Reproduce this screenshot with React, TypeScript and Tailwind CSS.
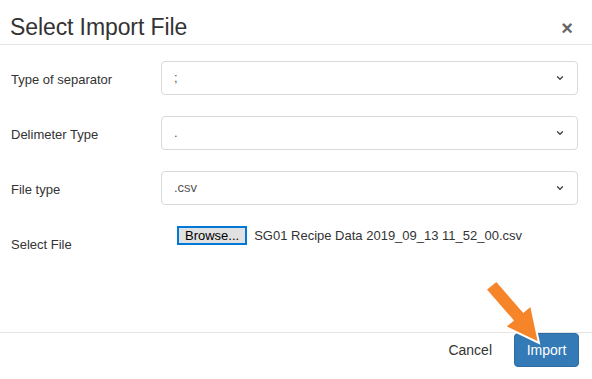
import { ChevronDown } from 'lucide-react'

const rows = [
    { label: 'Type of separator', value: ';' },
    { label: 'Delimeter Type', value: '.' },
    { label: 'File type', value: '.csv' },
]

function Arrow() {
    return (
        <svg className="absolute left-0 top-0 pointer-events-none" width="592" height="379" viewBox="0 0 592 379">
            <polygon
                points="485.6,289.4 496.4,280.6 523.4,311.6 531,305.3 539,343 505,326.7 512.6,320.4"
                fill="#f68428"
                stroke="#ffffff"
                strokeWidth="2"
                strokeLinejoin="miter"
            />
        </svg>
    )
}

export default function App() {
    return (
        <div className="relative w-[592px] h-[379px] bg-white overflow-hidden text-[#333] font-['Liberation_Sans',Arial,sans-serif]">
            {/* Header */}
            <div className="h-[45px] border-b border-[#e5e5e5] flex items-center justify-between pl-[10px] pr-[19px]">
                <h4 className="text-[23px] leading-none tracking-[-0.1px] mt-[11px]">Select Import File</h4>
                <button className="text-[20px] font-bold leading-none text-[#555] opacity-90 mt-[11px]">×</button>
            </div>

            {/* Body */}
            <div className="h-[287px] pt-[16px]">
                {rows.map((r) => (
                    <div key={r.label} className="flex items-center h-[34px] mb-[21px]">
                        <label className="w-[161px] pl-[11px] text-[13px] mt-[3px]">{r.label}</label>
                        <div className="w-[417px] h-[34px] border border-[#d9d9d9] rounded-[4px] flex items-center justify-between pl-[12px] pr-[12px]">
                            <span className="text-[13px] text-[#555]">{r.value}</span>
                            <ChevronDown className="w-[10px] h-[10px] text-[#444]" strokeWidth={3.2} />
                        </div>
                    </div>
                ))}
                <div className="flex h-[24px] mt-[1px]">
                    <label className="w-[161px] pl-[11px] text-[13px] pt-[9px]">Select File</label>
                    <div className="flex items-start pl-[16px]">
                        <button className="h-[19px] px-[6px] bg-[#e1e1e1] border-2 border-[#0078d7] text-[13px] leading-none text-black">Browse...</button>
                        <span className="ml-[7px] text-[13px] leading-[19px]">SG01 Recipe Data 2019_09_13 11_52_00.csv</span>
                    </div>
                </div>
            </div>

            {/* Footer */}
            <div className="border-t border-[#e5e5e5] flex items-center justify-end gap-[22px] pr-[13px]">
                <button className="text-[14px] text-[#333] mt-[1px]">Cancel</button>
                <button className="w-[65px] h-[34px] bg-[#337ab7] rounded-[4px] text-white text-[14px] border border-[#2e6da4]">Import</button>
            </div>

            <Arrow />
        </div>
    )
}
